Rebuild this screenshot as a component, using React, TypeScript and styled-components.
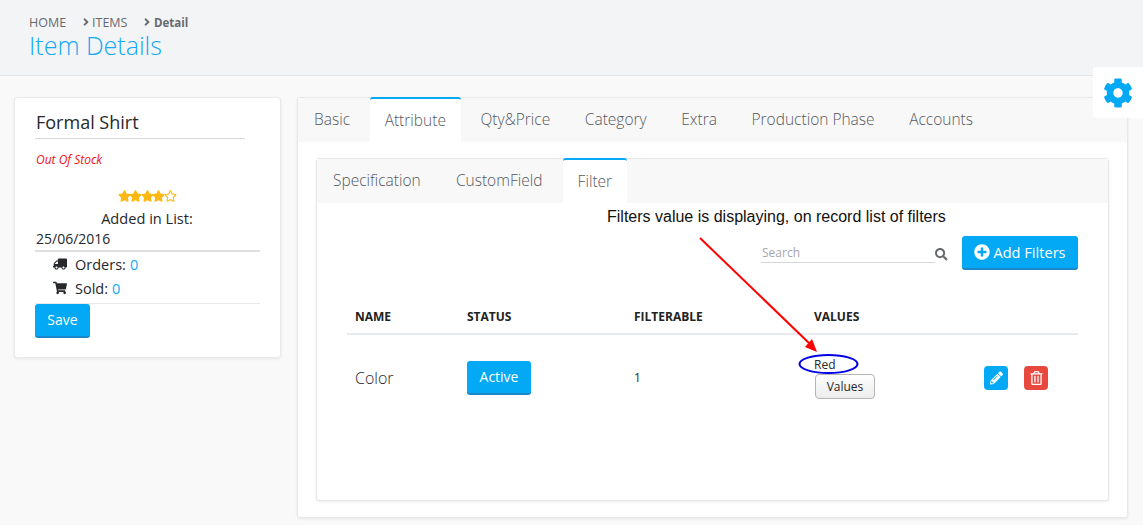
import React from 'react';
import styled, { createGlobalStyle } from 'styled-components';
import {
  FaAngleRight,
  FaCog,
  FaPencilAlt,
  FaPlusCircle,
  FaRegStar,
  FaRegTrashAlt,
  FaSearch,
  FaShoppingCart,
  FaStar,
  FaTruck,
} from 'react-icons/fa';

const GlobalStyle = createGlobalStyle`
  html, body {
    margin: 0;
    padding: 0;
    background: #f9f9f9;
    font-family: "Open Sans", sans-serif;
    color: #26282c;
    overflow: hidden;
  }
  * { box-sizing: border-box; }
`;

const Page = styled.div`
  position: relative;
  width: 1143px;
  height: 525px;
  overflow: hidden;
`;

const Header = styled.header`
  height: 76px;
  padding: 14px 0 0 29px;
  background: #f3f4f6;
  border-bottom: 1px solid #e2e4e8;
`;

const Breadcrumb = styled.div`
  display: flex;
  align-items: center;
  height: 16px;
  font-size: 12.5px;
  line-height: 15px;
  color: #66696e;
`;

const Crumb = styled.span<{ $bold?: boolean; $width?: number }>`
  display: inline-flex;
  align-items: center;
  width: ${(p) => (p.$width ? `${p.$width}px` : 'auto')};
  font-size: ${(p) => (p.$bold ? '11.5px' : 'inherit')};
  font-weight: ${(p) => (p.$bold ? 700 : 400)};
  svg { flex: none; width: 12px; height: 12px; margin-right: ${(p) => (p.$bold ? '1px' : '0')}; }
`;

const PageTitle = styled.h1`
  margin: 0;
  font-size: 25px;
  line-height: 30px;
  font-weight: 300;
  color: #12a9f5;
`;

const Content = styled.main`
  display: flex;
  align-items: flex-start;
  gap: 16px;
  padding: 21px 15px 0 14px;
`;

const SummaryCard = styled.aside`
  flex: 0 0 267px;
  height: 261px;
  padding: 0 20px;
  background: #fff;
  border: 1px solid #eaeaea;
  border-radius: 3px;
  box-shadow: 0 1px 3px rgba(0, 0, 0, 0.08);
`;

const ProductName = styled.h2`
  width: 210px;
  height: 41px;
  margin: 0;
  padding: 12px 0 0 1px;
  font-size: 18px;
  line-height: 25px;
  font-weight: 400;
  border-bottom: 1px solid #d8d9dc;
`;

const StockNote = styled.div`
  margin-top: 12px;
  padding-left: 1px;
  font-size: 12px;
  line-height: 17px;
  font-style: italic;
  color: #f01010;
`;

const Stars = styled.div`
  display: flex;
  justify-content: center;
  height: 14px;
  margin-top: 20px;
  padding-right: 1px;
  color: #fdb913;
  svg { width: 13px; height: 14px; margin: 1px -0.75px 0; }
`;

const AddedLabel = styled.div`
  margin-top: 6px;
  padding-right: 1px;
  text-align: center;
  font-size: 14.6px;
  line-height: 20px;
`;

const AddedDate = styled.div`
  height: 23px;
  margin-top: 1px;
  padding-left: 1px;
  font-size: 14px;
  line-height: 20px;
  border-bottom: 2px solid #dedfe1;
`;

const StatRow = styled.div`
  display: flex;
  align-items: center;
  height: 24px;
  padding-left: 18px;
  font-size: 14.5px;
  svg { width: 14px; height: 14px; margin-right: 8px; color: #26282c; }
`;

const TruckIcon = styled(FaTruck)`
  transform: scaleX(-1);
`;

const StatList = styled.div`
  height: 52px;
  border-bottom: 1px solid #e8e8e8;
`;

const Accent = styled.span`
  color: #12a9f5;
  margin-left: 4px;
`;

const PrimaryButton = styled.button`
  display: inline-flex;
  align-items: center;
  justify-content: center;
  padding: 0;
  border: 0;
  border-bottom: 2px solid #1b87c9;
  border-radius: 3px;
  background: #03a9f4;
  color: #fff;
  font-family: inherit;
  font-size: 14px;
`;

const SaveButton = styled(PrimaryButton)`
  width: 55px;
  height: 34px;
  padding-bottom: 1px;
`;

const TabsCard = styled.section<{ $inner?: boolean }>`
  flex: 1;
  height: ${(p) => (p.$inner ? '343px' : '421px')};
  background: #fff;
  border: 1px solid #e8e8ea;
  border-radius: 3px;
  box-shadow: 0 1px 3px rgba(0, 0, 0, 0.08);
`;

const TabBar = styled.div`
  display: flex;
  height: 44px;
  padding-left: 1px;
  background: #f8f8f8;
`;

const Tab = styled.div<{ $active?: boolean; $inner?: boolean }>`
  height: ${(p) => (p.$active ? '45px' : '44px')};
  margin-top: ${(p) => (p.$active ? '-1px' : '0')};
  margin-right: ${(p) => (p.$inner ? '5.2px' : '4.6px')};
  padding: 9px 15px 0;
  font-size: 15.5px;
  line-height: 24px;
  font-weight: 300;
  color: #55595f;
  background: ${(p) => (p.$active ? '#fff' : 'transparent')};
  border-top: ${(p) => (p.$active ? '2px solid #03a9f4' : '0')};
  border-radius: 3px 3px 0 0;
  white-space: nowrap;
`;

const MainTabBody = styled.div`
  padding: 16px 18px 0;
`;

const Pane = styled.div`
  padding: 0 30px;
`;

const Note = styled.div`
  height: 26px;
  padding: 4px 0 0 260px;
  font-family: "Liberation Sans", Arial, sans-serif;
  font-size: 16px;
  line-height: 20px;
  color: #111;
  white-space: nowrap;
`;

const Toolbar = styled.div`
  display: flex;
  justify-content: flex-end;
  align-items: flex-start;
  height: 34px;
  margin-top: 7px;
`;

const SearchField = styled.div`
  display: flex;
  align-items: flex-end;
  width: 174px;
  height: 27px;
  padding: 0 0 1px 1px;
  font-size: 12px;
  line-height: 17px;
  color: #a5a7aa;
  border-bottom: 1px solid #d6d7d9;
`;

const SearchIcon = styled(FaSearch)`
  width: 12.5px;
  height: 12.5px;
  margin: 12px 14.5px 0 0;
  color: #66696e;
`;

const AddButton = styled(PrimaryButton)`
  width: 116px;
  height: 34px;
  gap: 3px;
  padding-bottom: 1px;
  font-size: 14.6px;
  svg { width: 16px; height: 16px; }
`;

const Table = styled.table`
  width: 100%;
  margin-top: 30px;
  border-collapse: collapse;
  table-layout: fixed;
`;

const Th = styled.th<{ $width?: number }>`
  width: ${(p) => (p.$width ? `${p.$width}px` : 'auto')};
  height: 34px;
  padding: 0 8px;
  text-align: left;
  font-size: 12px;
  font-weight: 700;
  color: #222;
  border-bottom: 2px solid #e7ebf0;
`;

const Td = styled.td<{ $large?: boolean }>`
  height: 86px;
  padding: 0 8px;
  font-size: ${(p) => (p.$large ? '16px' : '12px')};
  font-weight: ${(p) => (p.$large ? 300 : 400)};
  vertical-align: middle;
`;

const StatusButton = styled(PrimaryButton)`
  width: 64px;
  height: 34px;
`;

const ValueRow = styled.div`
  display: flex;
  align-items: center;
`;

const ValueCell = styled.div`
  display: flex;
  flex-direction: column;
  align-items: flex-start;
  font-size: 12px;
  line-height: 17px;
  margin-top: -1px;
`;

const ValuesButton = styled.button`
  width: 60px;
  height: 25px;
  margin: 1px 0 0 1px;
  padding: 0;
  border: 1px solid #b5b5b5;
  border-radius: 4px;
  background: linear-gradient(#fff, #ececec);
  color: #26282c;
  font-family: inherit;
  font-size: 12px;
`;

const RowActions = styled.div`
  display: flex;
  gap: 16px;
  padding-left: 109px;
`;

const IconButton = styled.button<{ $danger?: boolean }>`
  display: flex;
  align-items: center;
  justify-content: center;
  width: 24px;
  height: 24px;
  padding: 0;
  border: 0;
  border-radius: 4px;
  background: ${(p) => (p.$danger ? '#e9483f' : '#03a9f4')};
  color: #fff;
  svg { width: 13px; height: 14px; }
`;

const SettingsTab = styled.div`
  position: absolute;
  top: 67px;
  right: 0;
  display: flex;
  align-items: center;
  justify-content: center;
  width: 50px;
  height: 51px;
  background: #fff;
  border-radius: 3px 0 0 3px;
  color: #03a9f4;
  svg { width: 30px; height: 30px; }
`;

const Annotation = styled.svg`
  position: absolute;
  top: 0;
  left: 0;
  width: 1143px;
  height: 525px;
  pointer-events: none;
`;

const mainTabs = ['Basic', 'Attribute', 'Qty&Price', 'Category', 'Extra', 'Production Phase', 'Accounts'];
const innerTabs = ['Specification', 'CustomField', 'Filter'];

const App: React.FC = () => {
  return (
    <Page>
      <GlobalStyle />
      <Header>
        <Breadcrumb>
          <Crumb $width={51}>HOME</Crumb>
          <Crumb $width={61}><FaAngleRight />ITEMS</Crumb>
          <Crumb $bold><FaAngleRight />Detail</Crumb>
        </Breadcrumb>
        <PageTitle>Item Details</PageTitle>
      </Header>
      <Content>
        <SummaryCard>
          <ProductName>Formal Shirt</ProductName>
          <StockNote>Out Of Stock</StockNote>
          <Stars>
            <FaStar /><FaStar /><FaStar /><FaStar /><FaRegStar />
          </Stars>
          <AddedLabel>Added in List:</AddedLabel>
          <AddedDate>25/06/2016</AddedDate>
          <StatList>
            <StatRow><TruckIcon />Orders:<Accent>0</Accent></StatRow>
            <StatRow><FaShoppingCart />Sold:<Accent>0</Accent></StatRow>
          </StatList>
          <SaveButton>Save</SaveButton>
        </SummaryCard>
        <TabsCard>
          <TabBar>
            {mainTabs.map((tab) => (
              <Tab key={tab} $active={tab === 'Attribute'}>{tab}</Tab>
            ))}
          </TabBar>
          <MainTabBody>
            <TabsCard $inner>
              <TabBar>
                {innerTabs.map((tab) => (
                  <Tab key={tab} $inner $active={tab === 'Filter'}>{tab}</Tab>
                ))}
              </TabBar>
              <Pane>
                <Note>Filters value is displaying, on record list of filters</Note>
                <Toolbar>
                  <SearchField>Search</SearchField>
                  <SearchIcon />
                  <AddButton><FaPlusCircle />Add Filters</AddButton>
                </Toolbar>
                <Table>
                  <thead>
                    <tr>
                      <Th $width={112}>NAME</Th>
                      <Th $width={167}>STATUS</Th>
                      <Th $width={180}>FILTERABLE</Th>
                      <Th>VALUES</Th>
                    </tr>
                  </thead>
                  <tbody>
                    <tr>
                      <Td $large>Color</Td>
                      <Td><StatusButton>Active</StatusButton></Td>
                      <Td>1</Td>
                      <Td>
                        <ValueRow>
                          <ValueCell>
                            Red
                            <ValuesButton>Values</ValuesButton>
                          </ValueCell>
                          <RowActions>
                            <IconButton><FaPencilAlt /></IconButton>
                            <IconButton $danger><FaRegTrashAlt /></IconButton>
                          </RowActions>
                        </ValueRow>
                      </Td>
                    </tr>
                  </tbody>
                </Table>
              </Pane>
            </TabsCard>
          </MainTabBody>
        </TabsCard>
      </Content>
      <SettingsTab><FaCog /></SettingsTab>
      <Annotation viewBox="0 0 1143 525">
        <line x1="700" y1="238" x2="810" y2="344" stroke="#ff0000" strokeWidth="2" />
        <polygon points="817,352 805,347 812,339" fill="#ff0000" />
        <ellipse cx="828.5" cy="364" rx="29" ry="9" fill="none" stroke="#0000e6" strokeWidth="2" />
      </Annotation>
    </Page>
  );
};

export default App;
